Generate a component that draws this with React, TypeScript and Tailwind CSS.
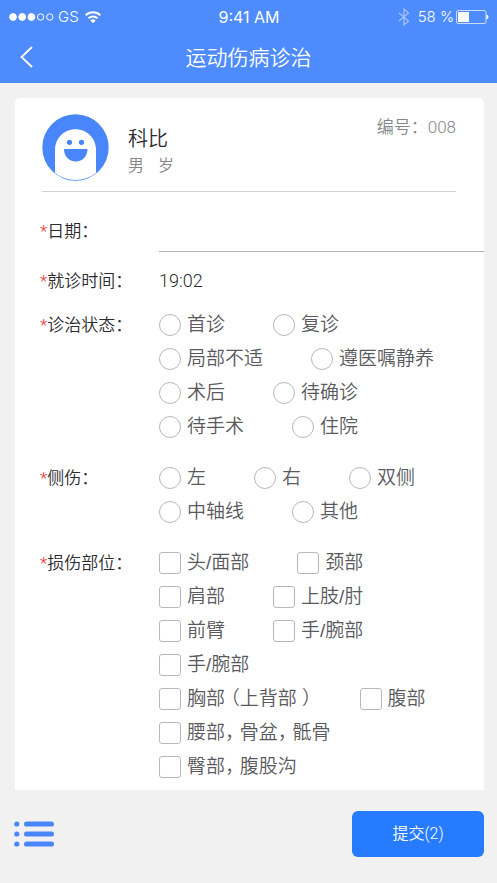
import type { ReactNode } from 'react';

const statusOptions = [
    '首诊',
    '复诊',
    '局部不适',
    '遵医嘱静养',
    '术后',
    '待确诊',
    '待手术',
    '住院',
];

const sideOptions = ['左', '右', '双侧', '中轴线', '其他'];

const partOptions = [
    { id: 'head', name: '头/面部' },
    { id: 'neck', name: '颈部' },
    { id: 'shoulder', name: '肩部' },
    { id: 'elbow', name: '上肢/肘' },
    { id: 'forearm', name: '前臂' },
    { id: 'wrist-left', name: '手/腕部' },
    { id: 'wrist-right', name: '手/腕部' },
    { id: 'chest', name: '胸部 （上背部 ）' },
    { id: 'abdomen', name: '腹部' },
    { id: 'waist', name: '腰部， 骨盆， 骶骨' },
    { id: 'hip', name: '臀部， 腹股沟' },
];

function StatusBar() {
    return (
        <div className="grid h-[34px] grid-cols-3 items-center pl-[9px] pr-2 font-['Inter',sans-serif] text-[15px] text-white">
            <div className="flex items-center gap-[3px]">
                <svg width="46" height="10" viewBox="0 0 46 10" fill="#fff" stroke="#fff">
                    <circle cx="4" cy="5" r="3.4" />
                    <circle cx="13.2" cy="5" r="3.4" />
                    <circle cx="22.4" cy="5" r="3.4" />
                    <circle cx="31.6" cy="5" r="3.2" fill="none" />
                    <circle cx="40.8" cy="5" r="3.2" fill="none" />
                </svg>
                <span className="font-light">GS</span>
                <svg className="ml-0.5" width="18" height="14" viewBox="0 0 18 14" fill="none" stroke="#fff" strokeWidth="2">
                    <path d="M1.7 5.2a10.6 10.6 0 0 1 14.6 0" />
                    <path d="M4.5 8.2a6.5 6.5 0 0 1 9 0" />
                    <path d="M9 13.2 6.3 10.6a4 4 0 0 1 5.4 0Z" fill="#fff" stroke="none" />
                </svg>
            </div>
            <div className="text-center text-base font-normal">9:41 AM</div>
            <div className="flex items-center justify-end whitespace-nowrap">
                <svg className="mr-2 opacity-50" width="12" height="18" viewBox="0 0 12 18" fill="none" stroke="#fff" strokeWidth="1.2">
                    <path d="m1 5 9.5 8L6 17V1l4.500 4L1 13" />
                </svg>
                <span className="mr-0.5">58 %</span>
                <svg width="33" height="14" viewBox="0 0 33 14">
                    <rect x="0.5" y="0.5" width="29.500" height="13" rx="1.5" fill="none" stroke="#fff" strokeOpacity="0.7" />
                    <rect x="2" y="2" width="11" height="10" fill="#fff" />
                    <path d="M30.500 4.500c1.200.4 2 1.400 2 2.500s-.8 2.100-2 2.500Z" fill="#fff" />
                </svg>
            </div>
        </div>
    );
}

function Avatar() {
    return (
        <svg className="shrink-0" width="67" height="67" viewBox="0 0 67 67">
            <circle cx="33.5" cy="33.5" r="33.2" fill="#4a86fb" />
            <path d="M13 59V36c0-11.800 9-20.700 20.500-20.700S54 24.200 54 36v23c-5.500 4.300-12.500 6.900-20.500 6.900S18.500 63.300 13 59Z" fill="#fff" />
            <circle cx="27.500" cy="28.300" r="2.600" fill="#4a86fb" />
            <circle cx="39.500" cy="28.300" r="2.600" fill="#4a86fb" />
            <path d="M22 35h23.500c0 7.500-5 12.500-11.750 12.500S22 42.500 22 35Z" fill="#4a86fb" />
        </svg>
    );
}

function FieldName({ children }: { children: ReactNode }) {
    return (
        <>
            <span className="text-[#f0322f]">*</span>
            {children}
        </>
    );
}

interface OptionProps {
    type: 'radio' | 'checkbox';
    name: string;
    value: string;
    text: string;
}

function Option({ type, name, value, text }: OptionProps) {
    return (
        <label className="mr-12 flex h-[34px] items-center gap-1.5 whitespace-nowrap font-['Liberation_Sans','Noto_Sans_CJK_SC',sans-serif] text-[19px] font-[350] leading-[30px] text-[#5a5a5e] [font-feature-settings:'halt']">
            <input
                type={type}
                name={name}
                value={value}
                className={
                    type === 'radio'
                        ? 'size-[22px] shrink-0 appearance-none rounded-full border border-[#b8b8bc] bg-white checked:border-[6px] checked:border-[#277bff]'
                        : 'size-[22px] shrink-0 appearance-none rounded-[3px] border border-[#b8b8bc] bg-white checked:border-[#277bff] checked:bg-[#277bff]'
                }
            />
            {text}
        </label>
    );
}

function OptionGroup({ title, children }: { title: string; children: ReactNode }) {
    return (
        <fieldset className="flex">
            <legend className="float-left w-[119px] shrink-0 text-[17px] leading-[34px]">
                <FieldName>{title}</FieldName>
            </legend>
            <div className="flex min-w-0 flex-1 flex-wrap">{children}</div>
        </fieldset>
    );
}

function App() {
    return (
        <div
            lang="zh-CN"
            className="flex min-h-screen flex-col bg-[#f1f1f1] font-['Roboto','Noto_Sans_CJK_SC',sans-serif] font-[350] text-[#2b2b2e]"
        >
            <header className="bg-[#4e8bfd] text-white">
                <StatusBar />
                <div className="grid h-[49px] grid-cols-[48px_1fr_48px] items-start">
                    <button type="button" aria-label="返回" className="flex h-[46px] items-center pl-5">
                        <svg width="13" height="22" viewBox="0 0 13 22" fill="none" stroke="#fff" strokeWidth="1.800">
                            <path d="M12 1 1.500 11 12 21" />
                        </svg>
                    </button>
                    <h1 className="text-center text-[21px] font-[350] leading-[48px]">运动伤病诊治</h1>
                </div>
            </header>

            <main className="flex-1 pl-[15px] pr-[13px] pt-[15px]">
                <form id="record" className="rounded-t-[5px] bg-white pb-1.5">
                    <div className="ml-[27px] mr-7 flex border-b border-[#d0d0d2] pb-[10px] pt-4">
                        <Avatar />
                        <div className="ml-[19px] pt-2.5">
                            <div className="text-xl leading-[30px]">科比</div>
                            <div className="flex gap-[14px] text-base leading-6 text-[#86868a]">
                                <span>男</span>
                                <span>岁</span>
                            </div>
                        </div>
                        <div className="ml-auto text-[17px] leading-[26px] text-[#86868a]">编号：008</div>
                    </div>

                    <div className="pl-[25px] pt-[22px]">
                        <div className="mb-3 flex h-[38px]">
                            <label htmlFor="date" className="w-[119px] shrink-0 text-[17px] leading-[34px]">
                                <FieldName>日期：</FieldName>
                            </label>
                            <input
                                id="date"
                                type="text"
                                className="min-w-0 flex-1 border-b border-[#b0b0b3] text-lg outline-none"
                            />
                        </div>
                        <div className="mb-2.5 flex text-[17px] leading-[34px]">
                            <div className="w-[119px] shrink-0">
                                <FieldName>就诊时间：</FieldName>
                            </div>
                            <time className="text-lg leading-[34px]">19:02</time>
                        </div>
                        <div className="flex flex-col gap-[17px]">
                            <OptionGroup title="诊治状态：">
                                {statusOptions.map((item) => (
                                    <Option key={item} type="radio" name="status" value={item} text={item} />
                                ))}
                            </OptionGroup>
                            <OptionGroup title="侧伤：">
                                {sideOptions.map((item) => (
                                    <Option key={item} type="radio" name="side" value={item} text={item} />
                                ))}
                            </OptionGroup>
                            <OptionGroup title="损伤部位：">
                                {partOptions.map((item) => (
                                    <Option key={item.id} type="checkbox" name="part" value={item.id} text={item.name} />
                                ))}
                            </OptionGroup>
                        </div>
                    </div>
                </form>
            </main>

            <footer className="flex items-center justify-between pb-[26px] pl-[14px] pr-[13px] pt-[21px]">
                <button type="button" aria-label="列表">
                    <svg width="40" height="26" viewBox="0 0 40 26" fill="#4a86fb">
                        <circle cx="2.800" cy="3" r="2.600" />
                        <circle cx="2.800" cy="13" r="2.600" />
                        <circle cx="2.800" cy="23" r="2.600" />
                        <rect x="10" y="0.400" width="30" height="5.200" rx="2.600" />
                        <rect x="10" y="10.400" width="30" height="5.200" rx="2.600" />
                        <rect x="10" y="20.400" width="30" height="5.200" rx="2.600" />
                    </svg>
                </button>
                <button
                    type="submit"
                    form="record"
                    className="h-[46px] w-[132px] rounded-md bg-[#277bff] text-base text-white"
                >
                    提交(2)
                </button>
            </footer>
        </div>
    );
}

export default App;
